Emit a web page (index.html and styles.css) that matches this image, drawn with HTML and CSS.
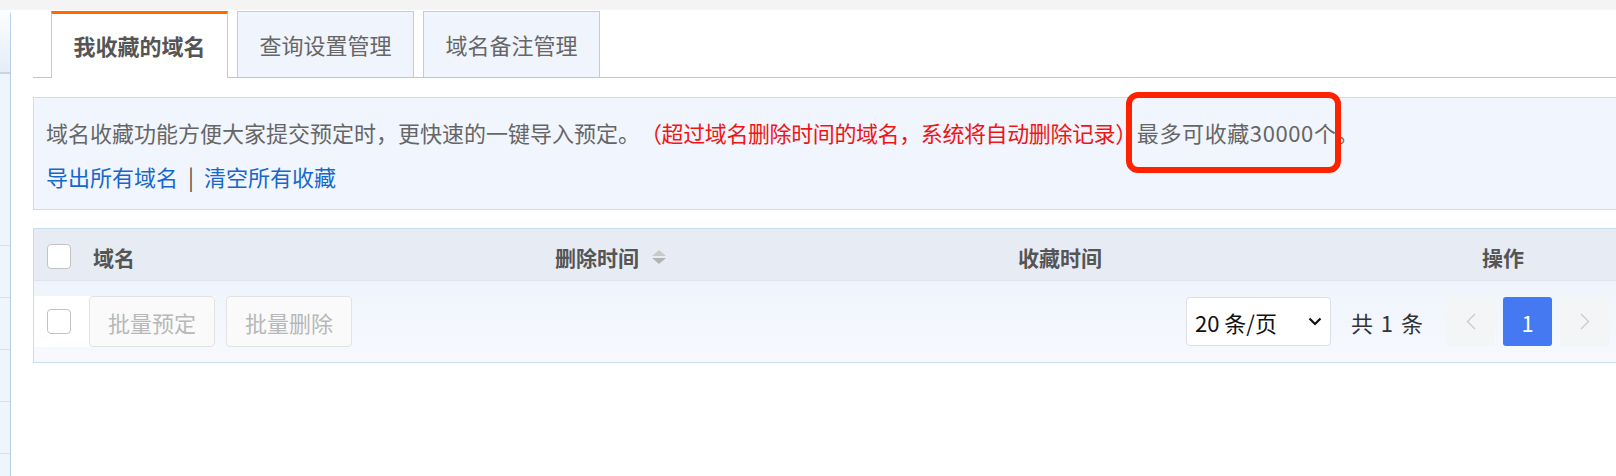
FILE: index.html
```html
<!DOCTYPE html>
<html lang="zh-CN">
<head>
  <meta charset="UTF-8">
  <title>我收藏的域名</title>
  <link rel="stylesheet" href="styles.css">
</head>
<body>
  <div class="topbar"></div>
  <div class="page">
    <div class="side">
      <div class="side-head"></div>
      <div class="side-item tall"></div>
      <div class="side-item"></div>
      <div class="side-item"></div>
      <div class="side-item"></div>
      <div class="side-item"></div>
    </div>

    <div class="main">
      <div class="tabs">
        <div class="tab active">我收藏的域名</div>
        <div class="tab">查询设置管理</div>
        <div class="tab">域名备注管理</div>
      </div>

      <div class="info">
        <p class="info-line">域名收藏功能方便大家提交预定时，更快速的一键导入预定。<span class="warn">（超过域名删除时间的域名，系统将自动删除记录）</span><span class="mark">最多可收藏30000个</span>。</p>
        <p class="info-line links"><a href="#">导出所有域名</a><span class="sep">|</span><a href="#">清空所有收藏</a></p>
      </div>

      <div class="table">
        <div class="thead">
          <div class="cell"><span class="checkbox"></span></div>
          <div class="cell">域名</div>
          <div class="cell">删除时间
            <svg class="sort" width="14" height="14" viewBox="0 0 14 14">
              <path d="M7 0 L14 6 L0 6 Z" fill="#c9c9c9"/>
              <path d="M0 8 L14 8 L7 14 Z" fill="#b3b3b3"/>
            </svg>
          </div>
          <div class="cell">收藏时间</div>
          <div class="cell">操作</div>
        </div>

        <div class="tfoot">
          <div class="batch">
            <span class="checkbox"></span>
            <button class="btn">批量预定</button>
          </div>
          <button class="btn">批量删除</button>

          <div class="pager">
            <div class="select">
              <span>20 条/页</span>
              <svg width="14" height="9" viewBox="0 0 14 9"><path d="M1.5 1.5 L7 7 L12.5 1.5" fill="none" stroke="#111" stroke-width="2.2"/></svg>
            </div>
            <span class="total">共 1 条</span>
            <div class="pages">
              <span class="page-btn"><svg width="10" height="17" viewBox="0 0 10 17"><path d="M9 1 L1.5 8.5 L9 16" fill="none" stroke="#c8ccd3" stroke-width="1.4"/></svg></span>
              <span class="page-btn current">1</span>
              <span class="page-btn"><svg width="10" height="17" viewBox="0 0 10 17"><path d="M1 1 L8.5 8.5 L1 16" fill="none" stroke="#c8ccd3" stroke-width="1.4"/></svg></span>
            </div>
          </div>
        </div>
      </div>
    </div>
  </div>
</body>
</html>
```

FILE: styles.css
```css
body {
  margin: 0;
  background: #fff;
  font-family: "Noto Sans CJK SC", "Noto Sans", sans-serif;
  font-size: 22px;
  color: #666;
  overflow: hidden;
}
.topbar {
  height: 10px;
  background: #f4f4f4;
}
.page {
  display: flex;
  height: 466px;
}
.side {
  width: 10px;
  border-right: 1px solid #b7cfe9;
  border-top-right-radius: 5px;
  background: #eef5fd;
}
.side-head {
  height: 62px;
  background: linear-gradient(#fdfeff, #e4edf8);
  border-bottom: 2px solid #c9d4e0;
}
.side-item {
  height: 51px;
  border-bottom: 1px solid #d3e3f4;
}
.side-item.tall {
  height: 171px;
}
.main {
  flex: 1;
  padding-left: 22px;
  margin-right: -2px;
}
.tabs {
  display: flex;
  align-items: flex-start;
  gap: 9px;
  margin-top: 1px;
  padding-left: 18px;
  border-bottom: 1px solid #b4c9e0;
}
.tab {
  box-sizing: border-box;
  width: 177px;
  height: 66px;
  border: 1px solid #b9cde4;
  border-bottom: none;
  background: #f0f4fc;
  text-align: center;
  line-height: 64px;
  color: #666;
}
.tab.active {
  height: 67px;
  margin-bottom: -1px;
  border-top: 3px solid #ff6a00;
  background: #fff;
  line-height: 62px;
  font-weight: bold;
  color: #555;
}
.info {
  margin-top: 19px;
  padding: 19px 12px 18px;
  background: #f1f5fd;
  border: 1px solid #c9dcf0;
}
.info-line {
  margin: 0;
  line-height: 30px;
  white-space: nowrap;
  text-spacing-trim: space-all;
}
.info-line.links {
  margin-top: 14px;
}
.warn {
  color: #f01414;
  letter-spacing: -0.4px;
}
.mark {
  position: relative;
  display: inline-block;
  letter-spacing: 0.6px;
}
.mark::after {
  content: "";
  position: absolute;
  left: -11px;
  right: -5px;
  top: -25px;
  bottom: -26px;
  border: 6px solid #ff2200;
  border-radius: 12px;
}
.links a {
  color: #1668cc;
  text-decoration: none;
}
.sep {
  color: #555;
  margin: 0 10px;
}
.table {
  margin-top: 18px;
  border: 1px solid #c9dcf0;
}
.thead {
  display: grid;
  grid-template-columns: 59px 462px 463px 464px 1fr;
  align-items: center;
  box-sizing: border-box;
  height: 52px;
  padding-top: 4px;
  background: #e7ecf4;
  border-bottom: 1px solid #dde4ee;
  font-size: 21px;
  font-weight: bold;
  color: #555;
}
.cell {
  display: flex;
  align-items: center;
}
.cell:first-child {
  padding-left: 13px;
}
.sort {
  margin-left: 13px;
}
.checkbox {
  display: inline-block;
  box-sizing: border-box;
  width: 24px;
  height: 25px;
  background: #fff;
  border: 1px solid #c3c3c3;
  border-radius: 4px;
}
.tfoot {
  display: flex;
  align-items: center;
  height: 81px;
  padding-right: 8px;
  background: linear-gradient(#eff4fc, #f7f9fe);
}
.batch {
  display: flex;
  align-items: center;
  gap: 18px;
  padding-left: 13px;
  height: 51px;
  background: #fff;
}
.btn {
  box-sizing: border-box;
  height: 51px;
  padding: 0 18px;
  background: #fafafa;
  border: 1px solid #e2e2e2;
  border-radius: 4px;
  font-family: inherit;
  font-size: 22px;
  color: #b8b8b8;
}
.batch + .btn {
  margin-left: 11px;
}
.pager {
  display: flex;
  align-items: center;
  margin-left: auto;
}
.select {
  box-sizing: border-box;
  display: flex;
  align-items: center;
  justify-content: space-between;
  width: 145px;
  height: 49px;
  padding: 0 8px;
  background: #fff;
  border: 1px solid #dcdfe3;
  border-radius: 4px;
  color: #111;
}
.total {
  margin: 0 23px 0 20px;
  word-spacing: 3px;
  color: #333;
}
.pages {
  display: flex;
  gap: 8px;
}
.page-btn {
  display: flex;
  align-items: center;
  justify-content: center;
  width: 49px;
  height: 49px;
  background: #f4f5f7;
  border-radius: 3px;
}
.page-btn.current {
  background: #4479f2;
  color: #fff;
}
```
